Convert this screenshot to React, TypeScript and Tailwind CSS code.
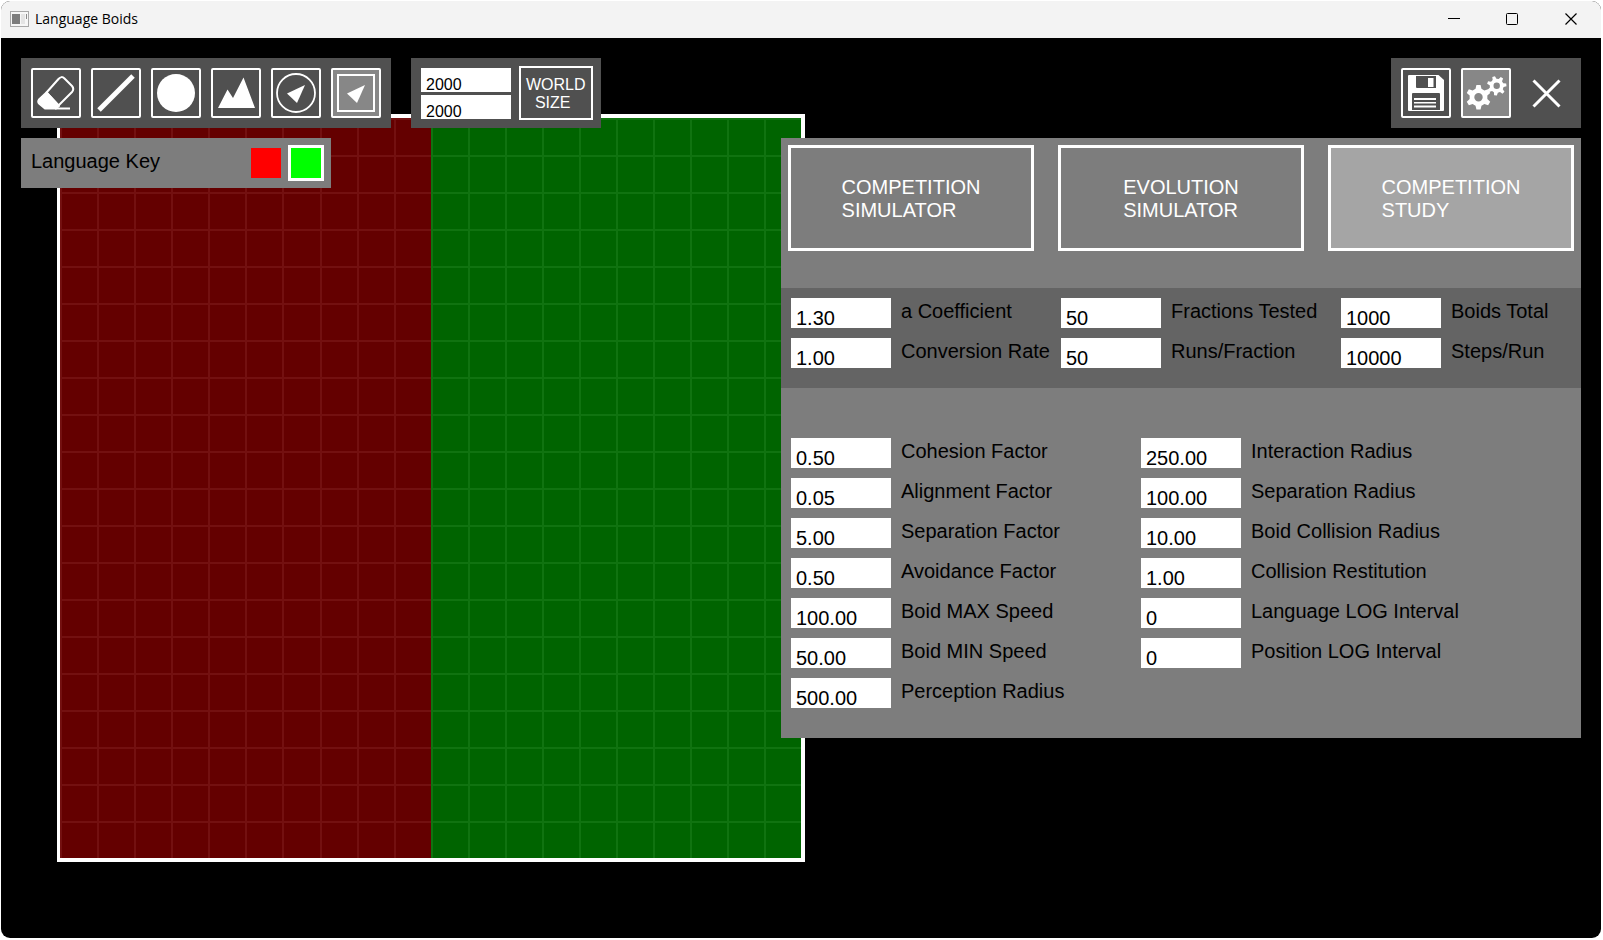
import React, { useId, useState } from "react";

const GRID_X = Array.from({ length: 20 }, (_, i) => i * 37 + (i > 6 ? 1 : 0));
const GRID_Y = Array.from({ length: 20 }, (_, i) => i * 37);

function World() {
  return (
    <div className="h-[748px] w-[748px] border-4 border-l-[3px] border-white bg-white">
      <svg width="741" height="740" shapeRendering="crispEdges" className="block" aria-label="World map">
        <rect width="371" height="740" fill="#640000" />
        <rect x="371" width="370" height="740" fill="#006400" />
        {GRID_X.map((x) => (
          <rect key={x} x={x} y="0" width="2" height="740" fill={x < 371 ? "#731010" : "#107310"} />
        ))}
        {GRID_Y.map((y) => (
          <g key={y}>
            <rect x="0" y={y} width="371" height="2" fill="#731010" />
            <rect x="371" y={y} width="370" height="2" fill="#107310" />
          </g>
        ))}
      </svg>
    </div>
  );
}

function EraserIcon() {
  return (
    <svg viewBox="0 0 50 50" className="size-full" fill="none" stroke="#fff" strokeWidth="2" strokeLinejoin="round">
      <path d="M15.500 24.500 L27.500 11 Q30.500 7.500 33.500 10.500 L41 18 Q43.500 21 41 24 L27.500 37.500 Z" />
      <path d="M15.500 24.500 L8 31.500 Q6.500 33.500 8 35.500 L14 40.500 H25 L28 38 Z" fill="#fff" />
      <path d="M24 40.500 H39" />
    </svg>
  );
}

function LineIcon() {
  return (
    <svg viewBox="0 0 50 50" className="size-full" stroke="#fff" strokeWidth="5">
      <path d="M8 42 L42 8" />
    </svg>
  );
}

function CircleIcon() {
  return (
    <svg viewBox="0 0 50 50" className="size-full" fill="#fff">
      <circle cx="25" cy="25" r="19" />
    </svg>
  );
}

function MountainIcon() {
  return (
    <svg viewBox="0 0 50 50" className="size-full" fill="#fff">
      <path d="M7 40 L16.500 21.500 L22 30 L32.500 9.500 L44 40 Z" />
    </svg>
  );
}

function BoidCircleIcon() {
  return (
    <svg viewBox="0 0 50 50" className="size-full" fill="#fff">
      <circle cx="25" cy="25" r="19" fill="none" stroke="#fff" strokeWidth="1.800" />
      <path d="M34 17 L16 25.500 L26 35 Z" />
    </svg>
  );
}

function BoidSquareIcon() {
  return (
    <svg viewBox="0 0 50 50" className="size-full" fill="#fff">
      <rect x="7" y="7" width="36" height="36" fill="none" stroke="#fff" strokeWidth="2" />
      <path d="M34 17 L16 25.500 L26 35 Z" />
    </svg>
  );
}

function SaveIcon() {
  return (
    <svg viewBox="0 0 50 50" className="size-full" fill="#fff">
      <path d="M8 7 H37.500 L43 12 V42 Q43 43 42 43 H8 Q7 43 7 42 V8 Q7 7 8 7 Z" />
      <path d="M15 8 H35 V20 H16 Q15 20 15 19 Z M12 25 H38 Q39 25 39 26 V42 H11 V26 Q11 25 12 25 Z" fill="#505050" />
      <path d="M27 10 H32.500 V19 H27 Z M13 30 H35 V32 H13 Z M13 34 H35 V35.500 H13 Z M13 37.500 H35 V39.500 H13 Z" />
    </svg>
  );
}

function gearPath(cx: number, cy: number, outer: number, inner: number, hole: number, teeth: number, turn: number) {
  const points: string[] = [];
  const step = (Math.PI * 2) / teeth;
  for (let i = 0; i < teeth; i++) {
    const mid = i * step + turn;
    const corners: [number, number][] = [
      [inner, -0.32],
      [outer, -0.16],
      [outer, 0.16],
      [inner, 0.32],
    ];
    for (const [r, f] of corners) {
      const a = mid + f * step;
      points.push(`${(cx + r * Math.cos(a)).toFixed(2)} ${(cy + r * Math.sin(a)).toFixed(2)}`);
    }
  }
  return `M${points.join(" L")} Z M${cx - hole} ${cy} a${hole} ${hole} 0 1 0 ${hole * 2} 0 a${hole} ${hole} 0 1 0 ${-hole * 2} 0 Z`;
}

function GearsIcon() {
  return (
    <svg viewBox="0 0 50 50" className="size-full" fill="#fff" fillRule="evenodd">
      <path d={gearPath(17.500, 29.300, 12.500, 9, 4.200, 6, Math.PI / 6)} />
      <path d={gearPath(35.700, 17.800, 9.800, 7, 3.200, 7, -0.1)} />
    </svg>
  );
}

const TOOLS = [
  { name: "Eraser", icon: <EraserIcon /> },
  { name: "Line", icon: <LineIcon /> },
  { name: "Circle", icon: <CircleIcon /> },
  { name: "Terrain", icon: <MountainIcon /> },
  { name: "Boid circle", icon: <BoidCircleIcon /> },
  { name: "Boid square", icon: <BoidSquareIcon /> },
];

type ToolButtonProps = { name: string; active?: boolean; onClick?: () => void; children: React.ReactNode };

function ToolButton({ name, active, onClick, children }: ToolButtonProps) {
  return (
    <button type="button" aria-label={name} aria-pressed={!!active} onClick={onClick} className={`grid size-[50px] place-items-stretch rounded-[2px] outline-2 -outline-offset-2 outline-white ${active ? "bg-[#878787]" : "bg-transparent"}`}>
      {children}
    </button>
  );
}

function Field({ label, value }: { label: string; value: string }) {
  const id = useId();
  return (
    <div className="flex h-[30px] items-start gap-2.5">
      <input id={id} defaultValue={value} className="h-[30px] w-[100px] bg-white pt-2.5 pl-[5px] text-[20px] text-black outline-none" />
      <label htmlFor={id} className="text-[20px] leading-[26px] whitespace-nowrap text-black">
        {label}
      </label>
    </div>
  );
}

const STUDY = [
  [["a Coefficient", "1.30"], ["Conversion Rate", "1.00"]],
  [["Fractions Tested", "50"], ["Runs/Fraction", "50"]],
  [["Boids Total", "1000"], ["Steps/Run", "10000"]],
];

const FACTORS = [
  ["Cohesion Factor", "0.50"],
  ["Alignment Factor", "0.05"],
  ["Separation Factor", "5.00"],
  ["Avoidance Factor", "0.50"],
  ["Boid MAX Speed", "100.00"],
  ["Boid MIN Speed", "50.00"],
  ["Perception Radius", "500.00"],
];

const RADII = [
  ["Interaction Radius", "250.00"],
  ["Separation Radius", "100.00"],
  ["Boid Collision Radius", "10.00"],
  ["Collision Restitution", "1.00"],
  ["Language LOG Interval", "0"],
  ["Position LOG Interval", "0"],
];

const MODES = [
  ["COMPETITION", "SIMULATOR"],
  ["EVOLUTION", "SIMULATOR"],
  ["COMPETITION", "STUDY"],
];

function FieldColumn({ fields }: { fields: string[][] }) {
  return (
    <div className="flex flex-col gap-2.5">
      {fields.map(([label, value]) => (
        <Field key={label} label={label} value={value} />
      ))}
    </div>
  );
}

function SettingsPanel() {
  const [mode, setMode] = useState(2);
  return (
    <section className="w-[800px] bg-[#7d7d7d] pb-[30px]">
      <div className="grid grid-cols-3 gap-6 p-[7px]">
        {MODES.map(([first, second], i) => (
          <button key={i} type="button" aria-pressed={mode === i} onClick={() => setMode(i)} className={`grid h-[106px] place-items-center border-[3px] border-white pt-0.5 text-left text-[20px] leading-[23px] text-white ${mode === i ? "bg-[#a5a5a5]" : "bg-transparent"}`}>
            <span>
              {first}
              <br />
              {second}
            </span>
          </button>
        ))}
      </div>
      <div className="mt-[30px] grid grid-cols-[270px_280px_1fr] bg-[#646464] px-2.5 pt-2.5 pb-5">
        {STUDY.map((fields) => (
          <FieldColumn key={fields[0][0]} fields={fields} />
        ))}
      </div>
      <div className="mt-[50px] grid grid-cols-[350px_1fr] px-2.5">
        <FieldColumn fields={FACTORS} />
        <FieldColumn fields={RADII} />
      </div>
    </section>
  );
}

function LanguageKey() {
  const [selected, setSelected] = useState(1);
  return (
    <section className="flex h-[50px] w-[310px] items-center bg-[#7d7d7d] pr-[7px] pl-2.5">
      <h2 className="mr-auto pb-1 text-[20px] leading-[26px] text-black">Language Key</h2>
      <button type="button" aria-label="Red language" aria-pressed={selected === 0} onClick={() => setSelected(0)} className={`size-9 border-[3px] bg-[#ff0000] bg-clip-padding ${selected === 0 ? "border-white" : "border-transparent"}`} />
      <button type="button" aria-label="Green language" aria-pressed={selected === 1} onClick={() => setSelected(1)} className={`ml-1 size-9 border-[3px] bg-[#00ff00] bg-clip-padding ${selected === 1 ? "border-white" : "border-transparent"}`} />
    </section>
  );
}

function TitleBar() {
  return (
    <header className="flex h-[37px] items-center bg-[#f3f3f3] pb-px pl-[9px] text-black">
      <svg width="19" height="16" viewBox="0 0 19 16" aria-hidden="true">
        <rect x="0.500" y="0.500" width="18" height="15" fill="#f6f6f6" stroke="#a8a8a8" />
        <rect x="2" y="3" width="8" height="10" fill="#7d7d7d" />
        <rect x="11" y="3" width="4" height="10" fill="#e4e4e4" />
        <rect x="16" y="3" width="1" height="5" fill="#8a8a8a" />
      </svg>
      <h1 className="ml-1.5 font-['Open_Sans','Noto_Sans',sans-serif] text-[14px] leading-5">Language Boids</h1>
      <div className="ml-auto flex items-center">
        <button type="button" aria-label="Minimize" className="grid h-9 w-[58px] place-items-center">
          <svg width="12" height="12" viewBox="0 0 12 12" stroke="#000" fill="none">
            <path d="M0 5.500 H12" />
          </svg>
        </button>
        <button type="button" aria-label="Maximize" className="grid h-9 w-[58px] place-items-center">
          <svg width="12" height="12" viewBox="0 0 12 12" stroke="#000" fill="none">
            <rect x="0.500" y="0.500" width="11" height="11" rx="1" />
          </svg>
        </button>
        <button type="button" aria-label="Close window" className="grid h-9 w-[60px] place-items-center">
          <svg width="12" height="12" viewBox="0 0 12 12" stroke="#000" strokeWidth="1.200" fill="none">
            <path d="M0.500 0.500 L11.500 11.500 M11.500 0.500 L0.500 11.500" />
          </svg>
        </button>
      </div>
    </header>
  );
}

export default function App() {
  const [tool, setTool] = useState(5);
  return (
    <div className="min-h-screen bg-white pt-px pr-0.5 pb-0.5 pl-px font-['Liberation_Sans',Arial,sans-serif]">
      <div className="flex min-h-[calc(100vh-3px)] flex-col overflow-hidden rounded-[9px] bg-black">
        <TitleBar />
        <main className="grid flex-1 grid-cols-1">
          <div className="col-start-1 row-start-1 pt-[76px] pl-14">
            <World />
          </div>
          <div className="z-10 col-start-1 row-start-1 flex flex-col gap-2.5 p-5">
            <div className="flex items-start gap-5">
              <nav aria-label="Drawing tools" className="flex gap-2.5 bg-[#505050] p-2.5">
                {TOOLS.map((t, i) => (
                  <ToolButton key={t.name} name={t.name} active={tool === i} onClick={() => setTool(i)}>
                    {t.icon}
                  </ToolButton>
                ))}
              </nav>
              <form className="flex h-[70px] items-center gap-2 bg-[#505050] pr-2 pl-2.5" onSubmit={(e) => e.preventDefault()}>
                <div className="flex flex-col gap-[3px]">
                  <input aria-label="World width" defaultValue="2000" className="h-6 w-[90px] bg-white pt-2.5 pl-[5px] text-[16px] text-black outline-none" />
                  <input aria-label="World height" defaultValue="2000" className="h-6 w-[90px] bg-white pt-2.5 pl-[5px] text-[16px] text-black outline-none" />
                </div>
                <button type="submit" className="h-[54px] w-[74px] border-2 border-white pt-0.5 pl-[5px] text-left text-[16px] leading-[18px] whitespace-pre text-white">
                  {"WORLD\n  SIZE"}
                </button>
              </form>
              <div className="ml-auto flex gap-2.5 bg-[#505050] p-2.5">
                <ToolButton name="Save">
                  <SaveIcon />
                </ToolButton>
                <ToolButton name="Settings" active>
                  <GearsIcon />
                </ToolButton>
                <button type="button" aria-label="Close" className="size-[50px]">
                  <svg viewBox="0 0 50 50" className="size-full" stroke="#fff" strokeWidth="3">
                    <path d="M12.500 12.500 L38.500 38.500 M38.500 12.500 L12.500 38.500" />
                  </svg>
                </button>
              </div>
            </div>
            <div className="flex items-start justify-between">
              <LanguageKey />
              <SettingsPanel />
            </div>
          </div>
        </main>
      </div>
    </div>
  );
}
